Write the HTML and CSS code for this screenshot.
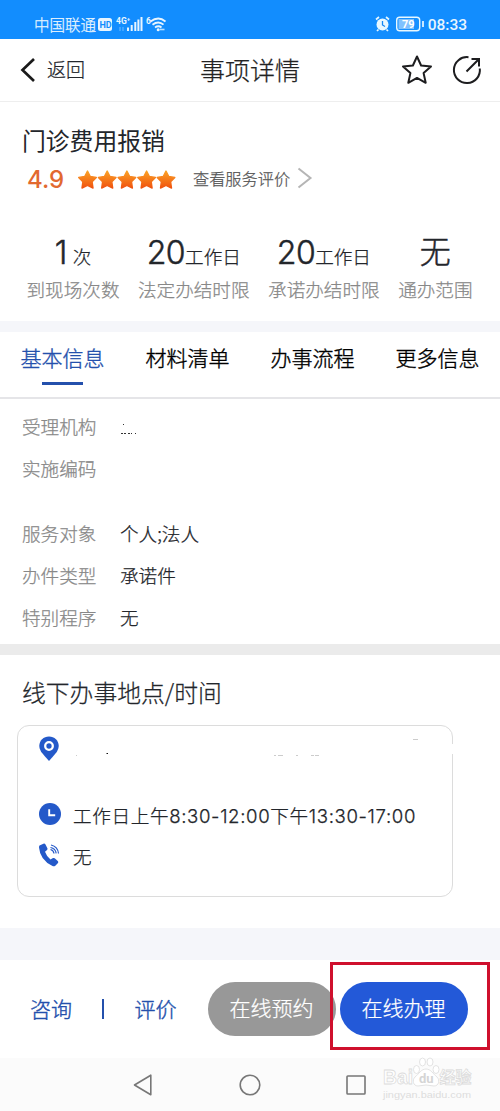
FILE: index.html
```html
<!DOCTYPE html>
<html lang="zh-CN">
<head>
<meta charset="utf-8">
<title>事项详情</title>
<link rel="stylesheet" href="styles.css">
</head>
<body>
<div class="phone">
  <header class="status">
    <span class="carrier">中国联通</span>
    <svg class="signals" width="68" height="18" viewBox="0 0 68 18">
      <rect x="0" y="3" width="14" height="13" rx="2.5" fill="#e8f5ff"/>
      <text x="1.5" y="13" class="hd">HD</text>
      <text x="18" y="8.500" class="net">4G⁺</text>
      <g fill="#e8f5ff"><rect x="29" y="12.5" width="2" height="3.5"/><rect x="32.7" y="10" width="2" height="6"/><rect x="36.3" y="7" width="2" height="9"/><rect x="39.4" y="4.5" width="2" height="11.500"/><rect x="42.500" y="2" width="2" height="14"/></g>
      <path d="M22 12v4M25 12v4" stroke="#6cbcff"/>
      <text x="48" y="8.500" class="net">6</text>
      <g fill="none" stroke="#e8f5ff" stroke-width="1.8"><path d="M52.500 6.500q8-6 15 0M54.500 9.700q6-4.500 11 0M57 12.500q3.500-2.500 6.500 0"/></g>
      <circle cx="60.200" cy="14.700" r="1.5" fill="#e8f5ff"/><path d="M62 14.500h4.500" stroke="#b8dfff" stroke-width="1.600"/>
    </svg>
    <svg class="alarm" width="50" height="18" viewBox="0 0 50 18">
      <circle cx="7.500" cy="9.500" r="6" fill="#e8f8ff"/><path d="M1 4.500 4 2M11 2l3 2.500M3.500 14.500 2 16M11.500 14.500 13 16" stroke="#e8f8ff" stroke-width="1.700"/><path d="M7.500 6v4l2.500 1.500" stroke="#1488f5" stroke-width="1.300" fill="none"/>
      <rect x="21.700" y="2.200" width="23" height="13.500" rx="3" fill="#1690ff" stroke="#e8f8ff" stroke-width="1.400"/><rect x="23.500" y="4" width="15.500" height="10" fill="#7fc1ff"/><text x="27" y="13" class="batt">79</text><path d="M48 6v6" stroke="#e8f8ff" stroke-width="1.700"/>
    </svg>
    <span class="clock">08:33</span>
  </header>

  <nav class="topbar">
    <svg class="back" width="16" height="26" viewBox="0 0 16 26"><path d="M14 2 2.500 13 14 24" fill="none" stroke="#1a1a1a" stroke-width="2.700"/></svg>
    <span class="back-label">返回</span>
    <h1 class="title">事项详情</h1>
    <svg class="fav" width="32" height="32" viewBox="0 0 32 32"><path d="m16 2.500 4.100 9 9.900 1-7.400 6.600 2.100 9.700L16 23.900l-8.700 4.900 2.100-9.700L2 12.500l9.900-1z" fill="none" stroke="#1d1d1f" stroke-width="2" stroke-linejoin="round"/></svg>
    <svg class="share" width="32" height="32" viewBox="0 0 32 32"><path d="M17.500 3.200A13 13 0 1 0 28.800 14.500M15.500 17.500 27.500 5.500M20.500 5h7.500v7.500" fill="none" stroke="#1d1d1f" stroke-width="2"/></svg>
  </nav>

  <section class="summary">
    <h2 class="service">门诊费用报销</h2>
    <div class="rating">
      <span class="score">4.9</span>
      <svg class="stars" width="98" height="20" viewBox="0 0 98 20">
        <defs>
          <linearGradient id="g" x1="0" y1="0" x2="0" y2="1"><stop offset="0" stop-color="#fba125"/><stop offset="1" stop-color="#f0530f"/></linearGradient>
          <path id="s" d="m9.500 1 2.800 5.500 6 .9-4.200 4.300.9 6.300-5.500-2.600L4 18l.9-6.300L.7 7.400l6-.9z" fill="url(#g)" stroke="url(#g)" stroke-width="1.400" stroke-linejoin="round"/>
        </defs>
        <use href="#s"/><use href="#s" x="19.700"/><use href="#s" x="39.400"/><use href="#s" x="59.100"/><use href="#s" x="78.500"/>
      </svg>
      <span class="review">查看服务评价</span>
      <svg class="more" width="16" height="22" viewBox="0 0 16 22"><path d="m1.500 1.500 12 9.500-12 9.500" fill="none" stroke="#b5b5b5" stroke-width="2"/></svg>
    </div>
    <div class="stats">
      <div class="stat"><div class="value"><b>1</b><span class="times">次</span></div><div class="label">到现场次数</div></div>
      <div class="stat"><div class="value"><b>20</b><span>工作日</span></div><div class="label">法定办结时限</div></div>
      <div class="stat"><div class="value"><b>20</b><span>工作日</span></div><div class="label">承诺办结时限</div></div>
      <div class="stat"><div class="value"><b class="none">无</b></div><div class="label">通办范围</div></div>
    </div>
  </section>

  <div class="tabs">
    <div class="tab active">基本信息</div><div class="tab">材料清单</div><div class="tab">办事流程</div><div class="tab">更多信息</div>
  </div>

  <section class="info">
    <div class="row"><span class="key">受理机构</span><svg class="specks" width="18" height="14" viewBox="0 0 18 14"><path d="M3 3.500h1M1 12.500h2M4 12.500h2M8 12.500h2M11 12.500h1M15 12.500h1" stroke="#333"/></svg></div>
    <div class="row tall"><span class="key">实施编码</span></div>
    <div class="row"><span class="key">服务对象</span><span>个人;法人</span></div>
    <div class="row"><span class="key">办件类型</span><span>承诺件</span></div>
    <div class="row"><span class="key">特别程序</span><span>无</span></div>
  </section>

  <section class="offline">
    <h3 class="heading">线下办事地点/时间</h3>
    <div class="card">
      <div class="line address">
        <svg width="22" height="26" viewBox="0 0 22 26"><path d="M10 .5C4.500.5.300 4.600.300 9.800c0 4.200 2.700 7.300 5.500 10.500L10 25l4.200-4.700c2.800-3.200 5.500-6.300 5.500-10.500C19.700 4.600 15.500.5 10 .5z" fill="#2459c9"/><circle cx="10" cy="10" r="3.800" fill="#2459c9" stroke="#fff" stroke-width="2.300"/></svg>
        <svg class="traces" width="360" height="22" viewBox="0 0 360 22"><path d="M33.500 17.500h1.500" stroke="#111"/><path d="M3 19.500h1M201 19.500h2M205 19.500h5M223 19.500h2M238 19.500h3M242 19.500h4M340 3.500h5" stroke="#ccc"/></svg>
      </div>
      <div class="line">
        <svg width="22" height="22" viewBox="0 0 22 22"><circle cx="11" cy="11" r="11" fill="#2459c9"/><path d="M10.200 6.300v6h6" fill="none" stroke="#fff" stroke-width="1.900"/></svg>
        <span class="hours">工作日上午8:30-12:00下午13:30-17:00</span>
      </div>
      <div class="line phone-line">
        <svg width="22" height="24" viewBox="0 0 22 24"><path d="M.5 2.500 5 .5q1 0 1.500 1l2 4q0 1-.5 1.500l-2 1.700q1.500 4.500 5.500 7.800l2.500-1.500q1-.3 1.700.3l3.300 3q.5 1 0 1.700L16 23q-1 .6-2.500 0Q1 17 0 4.500q0-1.500.5-2z" fill="#2459c9"/><path d="M11.500 6.500q3 .7 3.500 4M12 2q6.800 1.500 7.500 8.500M11.500 4.500q5 1 5.700 5.800" fill="none" stroke="#2459c9" stroke-width="1.200"/></svg>
        <span>无</span>
      </div>
      <i class="gap"></i>
    </div>
  </section>

  <footer class="actions">
    <span class="link">咨询</span><i class="divider"></i><span class="link">评价</span>
    <span class="btn book">在线预约</span><span class="btn apply">在线办理</span>
    <i class="frame"></i>
  </footer>

  <div class="system">
    <svg width="20" height="22" viewBox="0 0 20 22"><path d="M17.800 1.200v19.600L1.500 11z" fill="none" stroke="#777" stroke-width="1.600" stroke-linejoin="round"/></svg>
    <svg width="22" height="22" viewBox="0 0 22 22"><circle cx="11" cy="11" r="9.800" fill="none" stroke="#777" stroke-width="1.600"/></svg>
    <svg width="20" height="20" viewBox="0 0 20 20"><rect x="1" y="1" width="18" height="18" rx=".8" fill="none" stroke="#777" stroke-width="1.600"/></svg>
    <svg class="watermark" width="96" height="46" viewBox="0 0 96 46">
      <g fill="#fff" stroke="#dcdcdc" stroke-width=".8"><text x="1" y="25.500" class="wm-bai" textLength="30" lengthAdjust="spacingAndGlyphs">Bai</text><path d="M44 11c5 0 7 5 11 8 3 3 2 9-3 9-3 0-5-1-8-1s-5 1-8 1c-5 0-6-6-3-9 4-3 6-8 11-8z"/><ellipse cx="34.500" cy="11.500" rx="3" ry="4"/><ellipse cx="40.500" cy="4" rx="3" ry="4"/><ellipse cx="48" cy="4" rx="3" ry="4"/><ellipse cx="54" cy="11.500" rx="3" ry="4"/><text x="57.500" y="24.500" class="wm-cn">经验</text></g>
      <text x="37" y="25" class="wm-du">du</text>
      <text x="1" y="39.500" class="wm-url" textLength="88" lengthAdjust="spacingAndGlyphs">jingyan.baidu.com</text>
    </svg>
  </div>
</div>
</body>
</html>
```
FILE: styles.css
```css
* { box-sizing: border-box; }
body { margin: 0; background: #fff; font-family: "Noto Sans CJK SC", sans-serif; font-weight: 300; color: #23262b; -webkit-text-stroke: .25px; }
h1, h2, h3 { margin: 0; font-weight: 300; }
svg { display: block; flex: none; -webkit-text-stroke: 0; }
.phone { width: 500px; height: 1111px; display: flex; flex-direction: column; overflow: hidden; font-size: 18.600px; }
.phone > * { flex: none; }

.status { height: 39px; background: #128dfe; color: #e8f5ff; display: flex; align-items: center; padding: 9px 33px 0 34px; }
.carrier { font-size: 15.500px; line-height: 20px; }
.signals { margin-left: 2px; }
.alarm { margin-left: auto; }
.clock { font: 500 15.500px/20px Roboto, sans-serif; margin-left: 3px; padding-top: 2px; -webkit-text-stroke: 0; }
.hd { font: 700 9px Roboto, sans-serif; fill: #128dfe; }
.net { font: 700 8.500px Roboto, sans-serif; fill: #e8f5ff; }
.batt { font: 700 11px Roboto, sans-serif; fill: #fff; }

.topbar { height: 63px; border-bottom: 1px solid #eee; display: flex; align-items: center; padding: 0 17px 0 20px; }
.back-label { font-size: 19px; margin-left: 11px; width: 153px; padding-bottom: 3px; }
.title { font-size: 25px; line-height: 36px; padding-bottom: 3px; color: #222; }
.fav { margin-left: auto; }
.share { margin-left: 18px; }

.summary { height: 230px; padding: 21px 0 0 22px; border-bottom: 11px solid #f5f6fa; }
.service { font-size: 23.800px; line-height: 34px; font-weight: 400; -webkit-text-stroke: 0; }
.rating { height: 45px; display: flex; align-items: center; padding-left: 5px; }
.score { font: 500 24px/30px Inter, sans-serif; color: #e2692f; width: 51px; -webkit-text-stroke: 0; }
.review { font-size: 16.200px; color: #555; margin-left: 17px; width: 104px; padding-bottom: 3px; }
.more { margin-bottom: 3px; }
.stats { display: flex; gap: 18.500px; margin-top: 25px; padding-left: 4.500px; }
.stat { text-align: center; white-space: nowrap; }
.value { height: 49px; display: flex; justify-content: center; align-items: baseline; line-height: 50px; }
.value b { font: 300 32px/52px Inter, "Noto Sans CJK SC", sans-serif; letter-spacing: -.5px; -webkit-text-stroke: .5px; }
.value .none { font-family: "Noto Sans CJK SC", sans-serif; font-size: 31px; letter-spacing: 0; line-height: 46px; }
.times { margin-left: 6px; }
.label { color: #888; line-height: 26px; }

.tabs { height: 67px; display: grid; grid-template-columns: repeat(4, 1fr); border-bottom: 2px solid #e5e5e8; }
.tab { font-size: 21px; line-height: 30px; padding-top: 10px; display: flex; flex-direction: column; align-items: center; color: #000; -webkit-text-stroke: .4px; }
.active { color: #2450ac; }
.active::after { content: ""; width: 41px; height: 3px; background: #2450ac; margin-top: 10px; }

.info { height: 256px; border-bottom: 11px solid #ebebeb; padding: 6px 0 0 22px; }
.row { height: 41.800px; display: flex; align-items: center; }
.specks { margin-top: 4px; }
.tall { height: 65px; padding-bottom: 23px; }
.key { color: #888; width: 98px; }

.offline { height: 305px; border-bottom: 32px solid #f5f6fa; padding: 19px 0 0 17px; }
.heading { font-size: 23.800px; line-height: 36px; padding-left: 5px; }
.card { position: relative; width: 436px; height: 172px; margin-top: 15px; border: 1px solid #dcdcdc; border-radius: 12px; padding: 10px 0 0 21px; }
.line { display: flex; align-items: center; gap: 12px; height: 41px; white-space: nowrap; }
.address { height: 57px; align-items: flex-start; }
.hours, .phone-line span { font-family: Inter, "Noto Sans CJK SC", sans-serif; line-height: 28px; padding-top: 4px; }
.hours { letter-spacing: .64px; }
.gap { position: absolute; right: -1px; top: 18px; width: 2px; height: 10px; background: #fff; }

.actions { position: relative; height: 98px; display: flex; align-items: center; padding-left: 30px; font-size: 21px; }
.link { color: #2450ac; width: 42px; white-space: nowrap; padding-bottom: 3px; -webkit-text-stroke: .4px; }
.divider { width: 1.500px; height: 20px; margin: 0 31px 0 30px; background: #2450ac; }
.btn { width: 128px; height: 54px; border-radius: 27px; color: #fff; text-align: center; line-height: 51px; }
.book { background: #989898; margin-left: 31px; }
.apply { background: #2359d8; margin-left: 4px; }
.frame { position: absolute; left: 330px; top: 2px; width: 160px; height: 88px; border: 3px solid #cf102d; }

.system { position: relative; height: 53px; background: #fbfbfb; display: flex; align-items: center; padding-left: 133px; gap: 86px; }
.system svg:nth-child(3) { margin-left: -1px; }
.system .watermark { position: absolute; left: 382px; top: 0; overflow: visible; }
.wm-bai { font: 700 20px "Liberation Sans", sans-serif; }
.wm-cn { font: 700 16px "Noto Sans CJK SC", sans-serif; }
.wm-du { font: 700 13px Roboto, sans-serif; fill: #d5d5d5; }
.wm-url { font: 400 9px "Liberation Sans", sans-serif; fill: #ddd; }
```
